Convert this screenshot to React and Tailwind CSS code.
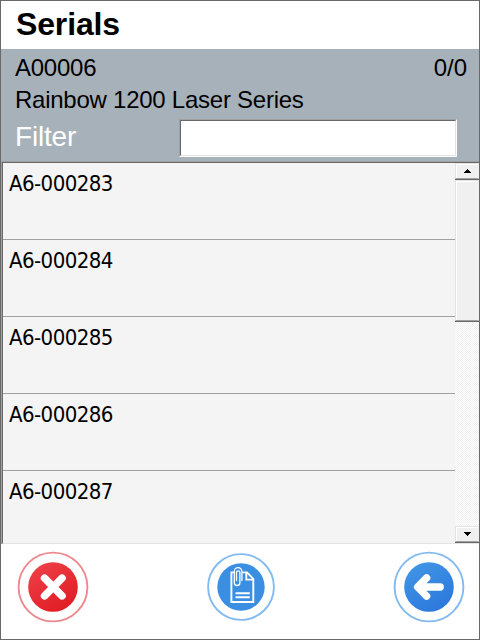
const serials = ['A6-000283', 'A6-000284', 'A6-000285', 'A6-000286', 'A6-000287'];

function ArrowButton({ down }) {
  return (
    <div className="flex h-[17px] w-full shrink-0 items-center justify-center border-b border-b-[#696969] bg-[#f0f0f0]">
      <div className="flex h-4 w-full items-center justify-center border border-t-[#e3e3e3] border-l-[#e3e3e3] border-r-transparent border-b-[#a0a0a0] shadow-[inset_1px_1px_0_#fff]">
        <svg width="7" height="4" viewBox="0 0 7 4" shapeRendering="crispEdges">
          {down ? (
            <path d="M0 0h7v1H0zM1 1h5v1H1zM2 2h3v1H2zM3 3h1v1H3z" />
          ) : (
            <path d="M3 0h1v1H3zM2 1h3v1H2zM1 2h5v1H1zM0 3h7v1H0z" />
          )}
        </svg>
      </div>
    </div>
  );
}

function Scrollbar() {
  return (
    <div className="flex w-6 shrink-0 flex-col bg-[repeating-conic-gradient(#ffffff_0_25%,#f0f0f0_0_50%)] bg-[length:2px_2px]">
      <ArrowButton />
      <div className="h-[142px] shrink-0 border-b border-b-[#696969] bg-[#f0f0f0]">
        <div className="h-full border border-t-[#e3e3e3] border-l-[#e3e3e3] border-r-transparent border-b-[#a0a0a0] shadow-[inset_1px_1px_0_#fff]" />
      </div>
      <div className="flex-1" />
      <ArrowButton down />
    </div>
  );
}

function CancelIcon() {
  return (
    <svg width="72" height="72" viewBox="0 0 72 72" fill="none">
      <defs>
        <linearGradient id="red" x1="0.2" y1="0" x2="0.8" y2="1">
          <stop stopColor="#ee4048" />
          <stop offset="1" stopColor="#e01b22" />
        </linearGradient>
      </defs>
      <circle cx="36" cy="36" r="34.4" stroke="#ec8a8f" strokeWidth="1.9" />
      <circle cx="36" cy="36" r="24.8" fill="url(#red)" />
      <path d="M27.6 27.2 45 44.8M45 27.2 27.6 44.8" stroke="#fff" strokeWidth="7.6" strokeLinecap="round" />
    </svg>
  );
}

function AttachIcon() {
  return (
    <svg width="70" height="70" viewBox="0 0 70 70" fill="none">
      <circle cx="35" cy="35" r="32.9" stroke="#83bbf0" strokeWidth="1.9" />
      <circle cx="35" cy="35" r="23.7" fill="#3b8fe3" />
      <g stroke="#fff" strokeWidth="1.9">
        <path d="M28 20.4H25.4V50H47.3V26.8L41 20.4H36.2" />
        <path d="M40.3 21V27.6H47" />
        <path d="M29.5 41.3H43.8M29.5 45.3H43.8" />
        <path d="M35.9 28.5V19.4a3.8 3.8 0 0 0-7.6 0V30.7a2.8 2.8 0 0 0 5.6 0V20.5a1.7 1.7 0 0 0-3.4 0V28.5" strokeWidth="1.3" strokeLinecap="round" />
      </g>
    </svg>
  );
}

function BackIcon() {
  return (
    <svg width="72" height="72" viewBox="0 0 72 72" fill="none">
      <defs>
        <linearGradient id="blue" x1="0.2" y1="0" x2="0.8" y2="1">
          <stop stopColor="#4196e5" />
          <stop offset="1" stopColor="#2b76dc" />
        </linearGradient>
      </defs>
      <circle cx="36" cy="36" r="34.4" stroke="#83bbf0" strokeWidth="1.9" />
      <circle cx="36" cy="36" r="24.8" fill="url(#blue)" />
      <path d="M33.6 26.8 24.6 36l9 9.2M25 36h22.2" stroke="#fff" strokeWidth="7.4" strokeLinecap="round" strokeLinejoin="round" />
    </svg>
  );
}

export default function App() {
  return (
    <div className="flex h-[640px] w-[480px] flex-col overflow-hidden border border-[#696969] bg-white font-['Liberation_Sans',Arial,sans-serif] text-black">
      <header className="h-12 shrink-0 pl-[15px]">
        <h1 className="text-[32px] leading-[46px] font-bold tracking-[-0.15px]">Serials</h1>
      </header>
      <section className="h-28 shrink-0 bg-[#a7b1b9] pt-[3px] pl-3.5">
        <div className="flex justify-between pr-3 text-2xl leading-8 tracking-[-0.25px]">
          <span>A00006</span>
          <span className="tracking-normal">0/0</span>
        </div>
        <div className="text-2xl leading-8 tracking-[-0.25px]">Rainbow 1200 Laser Series</div>
        <div className="flex items-start justify-between pt-[3px] pr-[22px]">
          <label htmlFor="filter" className="text-[28px] leading-9 tracking-[-0.2px] text-white">Filter</label>
          <div className="h-[38px] w-[278px] border border-t-[#a0a0a0] border-r-white border-b-white border-l-[#a0a0a0]">
            <input
              id="filter"
              className="block h-full w-full border border-t-[#696969] border-r-[#e3e3e3] border-b-[#e3e3e3] border-l-[#696969] bg-white px-1 outline-none"
            />
          </div>
        </div>
      </section>
      <section className="h-[383px] shrink-0 border-t border-l border-[#a0a0a0]">
        <div className="flex h-[382px] border-t border-b border-l border-t-[#696969] border-b-[#e3e3e3] border-l-[#696969]">
          <ul className="min-w-0 flex-1 overflow-hidden bg-[#f4f4f4] font-['DejaVu_Sans_Condensed','DejaVu_Sans',sans-serif] text-[22px] tracking-[-0.55px]">
            {serials.map((serial) => (
              <li key={serial} className="h-[77px] border-b border-[#a0a0a0] pt-[7px] pl-1.5 leading-7">
                {serial}
              </li>
            ))}
          </ul>
          <Scrollbar />
        </div>
      </section>
      <footer className="flex flex-1 items-start justify-between pt-[7px] pr-3.5 pl-4">
        <button aria-label="Cancel"><CancelIcon /></button>
        <button aria-label="Attachments" className="pt-px"><AttachIcon /></button>
        <button aria-label="Back"><BackIcon /></button>
      </footer>
    </div>
  );
}
